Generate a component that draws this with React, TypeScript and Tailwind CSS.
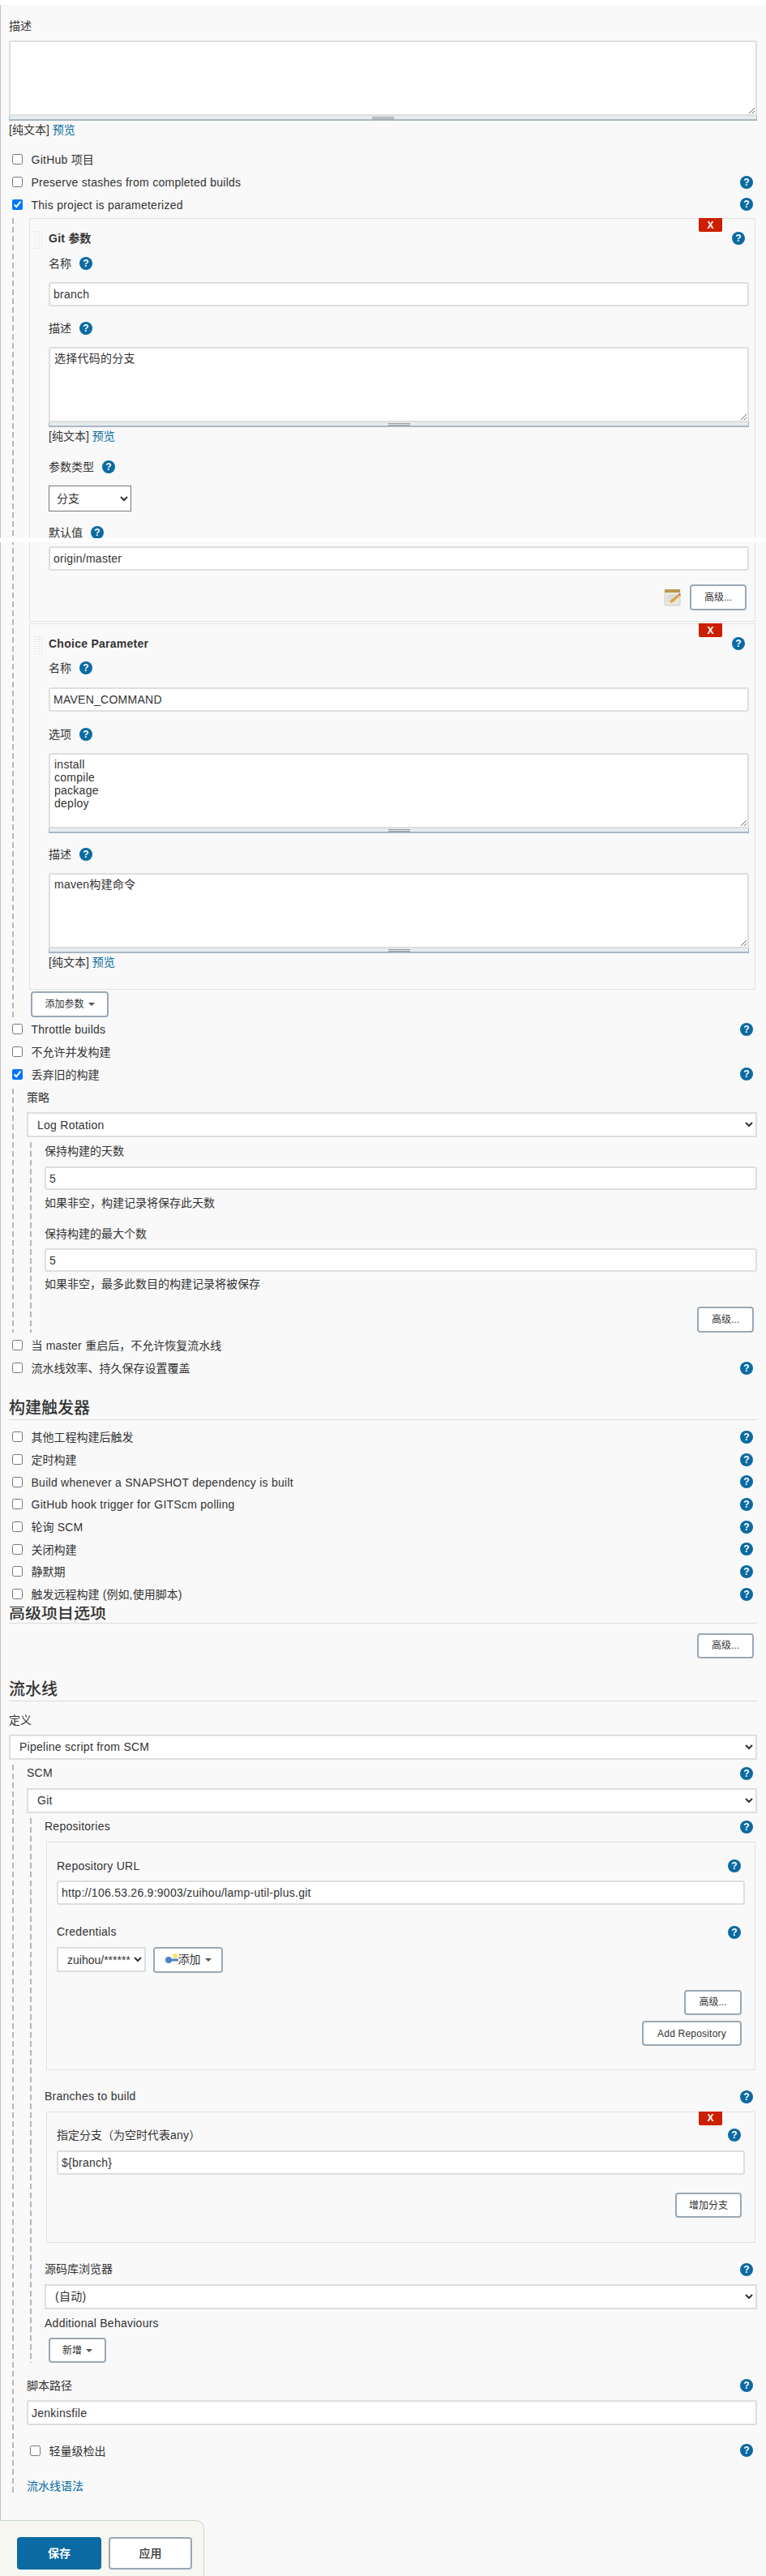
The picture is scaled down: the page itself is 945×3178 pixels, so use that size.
import React from 'react';

const fieldCls = 'block w-full bg-white border-2 border-[#dedede] rounded-[3px] text-[14px] tracking-[0.26px] text-[#333] px-[4px] outline-none';
const selectCls = 'block w-full bg-white border-2 border-[#dedede] text-[14px] tracking-[0.26px] text-[#333] pl-[7px] outline-none';
const dashed = 'bg-[repeating-linear-gradient(to_bottom,#b8b8b8_0,#b8b8b8_7px,transparent_7px,transparent_11px)] bg-[length:2px_100%] bg-no-repeat';

// latin runs sit a little wider in the picture than the CJK ones
const Txt = ({ text }: { text: string }) => (
  <span>
    {text.split(/([\x00-\x7f]+)/).map((part, i) =>
      /[\x00-\x7f]/.test(part) ? <span key={i} className="tracking-[0.26px]">{part}</span> : part
    )}
  </span>
);

const Help = ({ className = '' }: { className?: string }) => (
  <span className={`flex items-center justify-center w-4 h-4 shrink-0 rounded-full bg-[#0b6aa2] text-white text-[12px] font-bold leading-none ${className}`}>?</span>
);

const Label = ({ text, help, className = '', bold }: { text: string; help?: boolean; className?: string; bold?: boolean }) => (
  <div className={`flex items-center justify-between h-5 ${bold ? 'font-bold' : ''} ${className}`}>
    <Txt text={text} />
    {help && <Help className="mr-[5px]" />}
  </div>
);

const InlineLabel = ({ text, className = '' }: { text: string; className?: string }) => (
  <div className={`flex items-center gap-[10px] h-5 ${className}`}>
    <span>{text}</span>
    <Help />
  </div>
);

const CheckRow = ({ label, checked, help, className = '' }: { label: string; checked?: boolean; help?: boolean; className?: string }) => (
  <div className={`flex items-center h-[27.7px] ${className}`}>
    <input type="checkbox" defaultChecked={checked} className="w-[13px] h-[13px] ml-[4px] mr-[10.5px] mb-[2px] shrink-0 m-0" />
    <span className="flex-1"><Txt text={label} /></span>
    {help && <Help className="mr-[5px] mb-[2px]" />}
  </div>
);

const Grippie = () => (
  <div className="flex flex-col items-center justify-center gap-px h-[6px] bg-[#e6ecef] border-b-2 border-x border-[#a9b7c2]">
    <div className="w-[27px] h-px bg-[#999]" />
    <div className="w-[27px] h-px bg-[#999]" />
  </div>
);

const Area = ({ value, className = '' }: { value?: string; className?: string }) => (
  <div className={className}>
    <textarea defaultValue={value} className={`${fieldCls} pt-[4px] pl-[5px] leading-[16px] h-[93px] rounded-b-none`} />
    <Grippie />
  </div>
);

const Btn = ({ children, className = '' }: { children: React.ReactNode; className?: string }) => (
  <button className={`flex items-center justify-center bg-white border-2 border-[#9aa8b6] rounded-[4px] text-[12px] text-[#333] ${className}`}>{children}</button>
);

const Caret = () => <span className="ml-[5px] w-0 h-0 border-x-[4px] border-x-transparent border-t-[4px] border-t-[#555]" />;

const Plain = ({ className = '' }: { className?: string }) => (
  <div className={`h-5 flex items-center ${className}`}>
    <span>[纯文本]&nbsp;<a className="text-[#0b6aa2]">预览</a></span>
  </div>
);

const RemoveX = () => (
  <span className="absolute right-[40px] -top-px w-[29px] h-[17px] flex items-center justify-center bg-[#cc1f00] rounded-b-[2px] text-white text-[12px] font-bold">X</span>
);

const DragHandle = () => (
  <div className="absolute left-[4px] top-[14px] w-[12px] h-[24px] bg-[radial-gradient(#d8d8d8_1px,transparent_1px)] bg-[size:3px_3px]" />
);

const NoteIcon = () => (
  <svg width="22" height="22" viewBox="0 0 22 22" className="mr-[10px]">
    <rect x="1" y="3" width="19" height="18" rx="1" fill="#e8e8e0" stroke="#ccc" />
    <rect x="1" y="1" width="19" height="4" fill="#b89a4e" />
    <path d="M4 9h12M4 12h9M4 15h6" stroke="#c4c4c4" />
    <path d="M7 18l2-4L18 7l2 2-9 8z" fill="#d9a441" />
    <path d="M18 7l2 2 1-1-2-2z" fill="#d94040" />
  </svg>
);

const KeyIcon = () => (
  <svg width="16" height="16" viewBox="0 0 16 16" className="shrink-0">
    <circle cx="12" cy="3" r="3" fill="#f5e66a" />
    <circle cx="4" cy="8" r="4" fill="#4a86c0" />
    <rect x="6" y="6.5" width="10" height="3" fill="#4a86c0" />
  </svg>
);

const Section = ({ title, className = '', clipped }: { title: string; className?: string; clipped?: boolean }) => (
  <div className={`border-b border-[#dcdcdc] text-[20px] font-medium overflow-hidden box-content ${clipped ? 'h-5 leading-[16px]' : 'h-7 leading-[28px]'} ${className}`}>{title}</div>
);

const triggers = [
  '其他工程构建后触发',
  '定时构建',
  'Build whenever a SNAPSHOT dependency is built',
  'GitHub hook trigger for GITScm polling',
  '轮询 SCM',
  '关闭构建',
  '静默期',
  '触发远程构建 (例如,使用脚本)',
];

export default function App() {
  return (
    <div className="relative w-[945px] h-[3178px] overflow-hidden bg-[#f9f9f9] text-[14px] text-[#333] font-['Liberation_Sans','Noto_Sans_CJK_SC',sans-serif]">
      <div className="h-[6px] bg-white" />
      <main className="flow-root border-l border-[#c4c4c4] pl-[10px] pr-[11px] h-[3103px]">
        <Label text="描述" className="mt-[16px]" />
        <Area className="mt-[8px]" />
        <Plain className="mt-px" />
        <CheckRow label="GitHub 项目" className="mt-[14px]" />
        <CheckRow label="Preserve stashes from completed builds" help />
        <CheckRow label="This project is parameterized" checked help />

        <div className={`mt-[2px] ml-[4px] pl-[21px] ${dashed}`}>
          <div className="mr-[2px]">
            <div className="relative border border-[#e2e2e2] pl-[23px] pr-[7px] pt-[14px] pb-[13px]">
              <RemoveX />
              <DragHandle />
              <Label text="Git 参数" help bold />
              <InlineLabel text="名称" className="mt-[11px]" />
              <input defaultValue="branch" className={`${fieldCls} h-[30px] mt-[13px]`} />
              <InlineLabel text="描述" className="mt-[17px]" />
              <Area value="选择代码的分支" className="mt-[13px]" />
              <Plain className="mt-px" />
              <InlineLabel text="参数类型" className="mt-[18px]" />
              <select className="block mt-[13px] w-[102px] h-[32px] bg-white border border-[#777] pl-[5px] text-[14px] text-[#333]">
                <option>分支</option>
              </select>
              <InlineLabel text="默认值" className="mt-[16px]" />
              <input defaultValue="origin/master" className={`${fieldCls} h-[30px] mt-[7px]`} />
              <div className="flex items-center justify-end mt-[17px] pr-[3px]">
                <NoteIcon />
                <Btn className="w-[70px] h-[32px]">高级...</Btn>
              </div>
            </div>

            <div className="relative mt-[2px] border border-[#e2e2e2] pl-[23px] pr-[7px] pt-[14px] pb-[23px]">
              <RemoveX />
              <DragHandle />
              <Label text="Choice Parameter" help bold />
              <InlineLabel text="名称" className="mt-[10px]" />
              <input defaultValue="MAVEN_COMMAND" className={`${fieldCls} h-[30px] mt-[14px]`} />
              <InlineLabel text="选项" className="mt-[18px]" />
              <Area value={'install\ncompile\npackage\ndeploy'} className="mt-[13px]" />
              <InlineLabel text="描述" className="mt-[16px]" />
              <Area value="maven构建命令" className="mt-[13px]" />
              <Plain className="mt-px" />
            </div>
          </div>
          <Btn className="w-[96px] h-[32px] mt-[2px] ml-[2px]">添加参数<Caret /></Btn>
        </div>

        <CheckRow label="Throttle builds" help className="mt-[2px]" />
        <CheckRow label="不允许并发构建" />
        <CheckRow label="丢弃旧的构建" checked help />

        <div className={`mt-[3px] ml-[4px] pl-[18px] pt-px ${dashed}`}>
          <Label text="策略" />
          <select className={`${selectCls} h-[31px] mt-[8px]`}><option>Log Rotation</option></select>
          <div className={`mt-[6px] ml-[4px] pl-[18px] pt-px ${dashed}`}>
            <Label text="保持构建的天数" />
            <input defaultValue="5" className={`${fieldCls} h-[29px] mt-[9px]`} />
            <div className="h-5 mt-[6px] flex items-center">如果非空，构建记录将保存此天数</div>
            <Label text="保持构建的最大个数" className="mt-[18px]" />
            <input defaultValue="5" className={`${fieldCls} h-[29px] mt-[8px]`} />
            <div className="h-5 mt-[5px] flex items-center">如果非空，最多此数目的构建记录将被保存</div>
            <div className="flex justify-end mt-[18px] pr-[4px]">
              <Btn className="w-[70px] h-[32px]">高级...</Btn>
            </div>
          </div>
        </div>

        <CheckRow label="当 master 重启后，不允许恢复流水线" className="mt-[3px]" />
        <CheckRow label="流水线效率、持久保存设置覆盖" help />

        <Section title="构建触发器" className="mt-[20px]" />
        <div className="mt-[8.5px]">
          {triggers.map((label) => (
            <CheckRow key={label} label={label} help />
          ))}
        </div>
        <Section title="高级项目选项" clipped />
        <div className="flex justify-end mt-[12px] pr-[4px]">
          <Btn className="w-[70px] h-[31px]">高级...</Btn>
        </div>

        <Section title="流水线" className="mt-[24px]" />
        <Label text="定义" className="mt-[14px]" />
        <select className={`${selectCls} h-[31px] mt-[7px]`}><option>Pipeline script from SCM</option></select>

        <div className={`mt-[6px] ml-[4px] pl-[18px] pt-px ${dashed}`}>
          <Label text="SCM" help />
          <select className={`${selectCls} h-[31px] mt-[8px]`}><option>Git</option></select>

          <div className={`mt-[6px] ml-[4px] pl-[18px] pt-px ${dashed}`}>
            <Label text="Repositories" help />
            <div className="mt-[8px] mx-[2px] border border-[#e2e2e2] pl-[12px] pr-[12px] pt-[19.5px] pb-[29px]">
              <Label text="Repository URL" help />
              <input defaultValue="http://106.53.26.9:9003/zuihou/lamp-util-plus.git" className={`${fieldCls} h-[30.5px] mt-[7.5px]`} />
              <Label text="Credentials" help className="mt-[23.5px]" />
              <div className="flex items-center mt-[8px]">
                <select className="block w-[110px] h-[31px] bg-white border-2 border-[#dedede] text-[14px] text-[#333] pl-[7px] pr-[2px] outline-none"><option>zuihou/******</option></select>
                <Btn className="w-[86px] h-[32px] ml-[9px]"><KeyIcon /><span className="text-[14px]">添加</span><Caret /></Btn>
              </div>
              <div className="flex flex-col items-end mt-[21px] pr-[4px] gap-[7.5px]">
                <Btn className="w-[71px] h-[31px]">高级...</Btn>
                <Btn className="w-[123px] h-[31px] tracking-[0.2px]">Add Repository</Btn>
              </div>
            </div>

            <Label text="Branches to build" help className="mt-[22.5px]" />
            <div className="relative mt-[8px] mx-[2px] border border-[#e2e2e2] pl-[12px] pr-[12px] pt-[18.5px] pb-[30px]">
              <RemoveX />
              <Label text="指定分支（为空时代表any）" help />
              <input defaultValue="${branch}" className={`${fieldCls} h-[30px] mt-[9px]`} />
              <div className="flex justify-end mt-[22px] pr-[4px]">
                <Btn className="w-[82px] h-[31px]">增加分支</Btn>
              </div>
            </div>

            <Label text="源码库浏览器" help className="mt-[22.5px]" />
            <select className={`${selectCls} h-[30.5px] mt-[8.5px]`}><option>(自动)</option></select>
            <Label text="Additional Behaviours" className="mt-[7.5px]" />
            <Btn className="w-[71px] h-[31px] mt-[8px] ml-[5px]">新增<Caret /></Btn>
          </div>

          <Label text="脚本路径" help className="mt-[18px]" />
          <input defaultValue="Jenkinsfile" className={`${fieldCls} h-[31px] mt-[8px]`} />
          <CheckRow label="轻量级检出" help className="mt-[18.6px]" />
          <div className="h-5 mt-[20.2px] pb-px flex items-center text-[#0b6aa2]">流水线语法</div>
        </div>
      </main>

      <div className="flex items-start gap-[9px] w-[252px] h-[69px] pl-[21px] pt-[20px] bg-[#f5f7f0] border-t border-r border-[#c9d9cc] rounded-tr-[10px]">
        <button className="w-[104px] h-[40px] rounded-[4px] bg-[#0b6aa2] text-white text-[14px] font-bold">保存</button>
        <button className="w-[103px] h-[40px] rounded-[4px] bg-white border-2 border-[#9aa8b6] text-[14px] text-[#333] font-medium">应用</button>
      </div>

      {/* seam of the stitched capture */}
      <div className="absolute left-0 right-0 top-[664px] h-[5px] bg-white" />
    </div>
  );
}
